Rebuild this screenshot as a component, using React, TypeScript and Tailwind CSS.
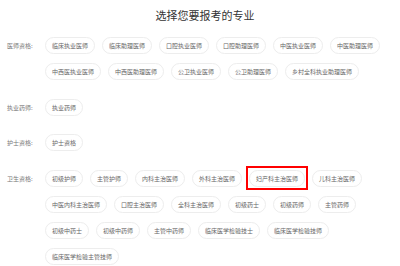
import React from 'react';

interface Section {
  label: string;
  items: string[];
}

const sections: Section[] = [
  {
    label: '医师资格:',
    items: [
      '临床执业医师',
      '临床助理医师',
      '口腔执业医师',
      '口腔助理医师',
      '中医执业医师',
      '中医助理医师',
      '中西医执业医师',
      '中西医助理医师',
      '公卫执业医师',
      '公卫助理医师',
      '乡村全科执业助理医师',
    ],
  },
  { label: '执业药师:', items: ['执业药师'] },
  { label: '护士资格:', items: ['护士资格'] },
  {
    label: '卫生资格:',
    items: [
      '初级护师',
      '主管护师',
      '内科主治医师',
      '外科主治医师',
      '妇产科主治医师',
      '儿科主治医师',
      '中医内科主治医师',
      '口腔主治医师',
      '全科主治医师',
      '初级药士',
      '初级药师',
      '主管药师',
      '初级中药士',
      '初级中药师',
      '主管中药师',
      '临床医学检验技士',
      '临床医学检验技师',
      '临床医学检验主管技师',
    ],
  },
];

const selected = '妇产科主治医师';

const App = () => {
  return (
    <div
      className="w-[400px] h-[266px] bg-white overflow-hidden"
      style={{ fontFamily: '"Noto Sans CJK SC", "Noto Sans", sans-serif' }}
    >
      {/* Title */}
      <div className="pt-[7px] pl-[10px] text-center text-[11px] leading-[16px] text-[#333]">
        选择您要报考的专业
      </div>

      {/* Sections */}
      <div className="mt-[14px] flex flex-col gap-[18.5px]">
        {sections.map(section => (
          <div key={section.label} className="flex pl-[7px] pr-[15px]">
            <div className="w-[38px] h-[17px] shrink-0 flex items-center text-[6px] text-[#777]">
              {section.label}
            </div>
            <div className="flex flex-wrap gap-x-[7px] gap-y-[9px]">
              {section.items.map(item => (
                <div
                  key={item}
                  className="relative h-[17px] px-[6px] flex items-center rounded-full border border-[#ededed] bg-white text-[6px] text-[#666] whitespace-nowrap"
                >
                  {item}
                  {/* highlight box around the chosen one */}
                  {item === selected && (
                    <span className="absolute -left-[4px] -right-[4px] -top-[5px] -bottom-[4px] border-2 border-[#ff0000]" />
                  )}
                </div>
              ))}
            </div>
          </div>
        ))}
      </div>
    </div>
  );
};

export default App;
